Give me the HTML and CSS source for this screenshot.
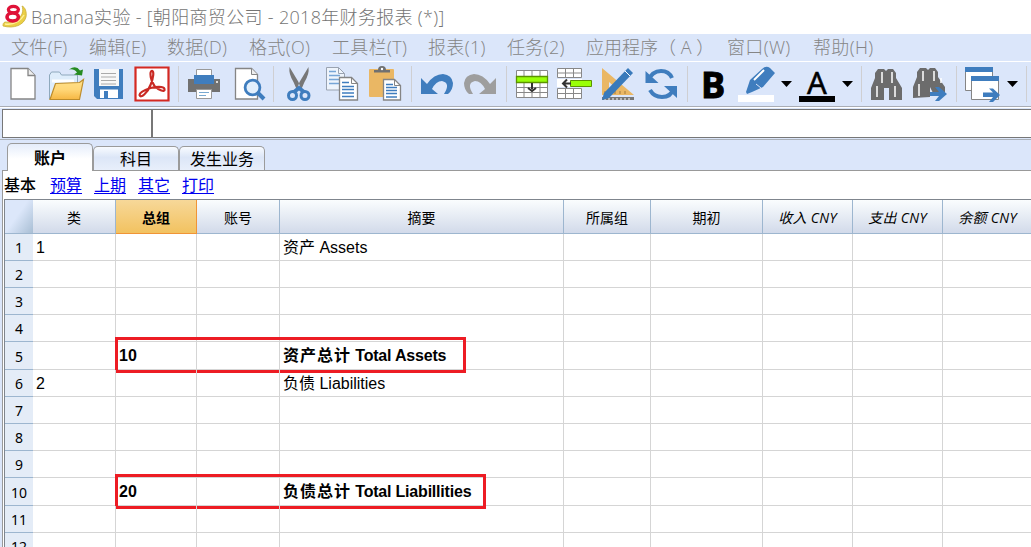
FILE: index.html
```html
<!DOCTYPE html>
<html lang="zh-CN">
<head>
<meta charset="utf-8">
<title>Banana实验 - [朝阳商贸公司 - 2018年财务报表 (*)]</title>
<link rel="stylesheet" href="styles.css">
</head>
<body>
<header class="titlebar">
  <svg class="logo" width="31" height="34" viewBox="0 0 31 34">
    <path d="M22 6c3 1 5 6 4 11-2 8-12 12-23 9 0-2 0-3 2-4 8 1 14-2 17-8 1-3 1-6 0-8z" fill="#ebcf45" stroke="#c9ae3a" stroke-width=".8"/>
    <path d="M5 24c9 1 15-2 19-9" fill="none" stroke="#fff19a" stroke-width="1.4"/>
    <ellipse cx="13.4" cy="9.6" rx="5" ry="3.3" fill="#fff" stroke="#df1238" stroke-width="3.3"/>
    <ellipse cx="12.7" cy="17" rx="5.700" ry="4" fill="#fff" stroke="#df1238" stroke-width="3.6"/>
  </svg>
  <h1 class="title">Banana实验 - [朝阳商贸公司 - 2018年财务报表 (*)]</h1>
</header>
<nav class="menu">
  <span>文件(F)</span><span>编辑(E)</span><span>数据(D)</span><span>格式(O)</span><span>工具栏(T)</span><span>报表(1)</span><span>任务(2)</span><span class="wide">应用程序（ A ）</span><span>窗口(W)</span><span>帮助(H)</span>
</nav>
<div class="toolbar">
  <div class="group">
    <svg width="45" height="44" viewBox="0 62 45 44"><path d="M11 68.5h17l7 7V99H11z" fill="#fff" stroke="#858585" stroke-width="1.3"/><path d="M28 68.5v7h7" fill="#eee" stroke="#858585" stroke-width="1.3"/></svg>
    <svg width="45" height="44" viewBox="45 62 45 44"><path d="M49.5 99V75l2-3h8l2 3h16v8" fill="#deedfb" stroke="#8ea9bd"/><path d="M52 81h22" stroke="#fff" stroke-width="3"/><path d="M50 99.500l5.500-16 24-1 4-3-4 20z" fill="url(#folder)" stroke="#bd8c2b" stroke-width="1.2"/><path d="M69 69.500q7-5 11 1l3-1-1 6-8-1 3-2q-3-4-8-3z" fill="#268b22"/><defs><linearGradient id="folder" x2="0" y2="1"><stop stop-color="#ffe18a"/><stop offset=".5" stop-color="#ffd778"/><stop offset="1" stop-color="#f6b743"/></linearGradient></defs></svg>
    <svg width="40" height="44" viewBox="90 62 40 44"><path d="M94 69h29v30H97l-3-3z" fill="#3f7dbe"/><path d="M99 69h20v17H99z" fill="#f8f8f8"/><path d="M101 73.500h15M101 77h15M101 80.500h15M101 84h15" stroke="#aaa"/><path d="M100 89.500h18V98h-18z" fill="#fff"/><path d="M104 91h4v7h-4z" fill="#3f7dbe"/></svg>
    <svg width="48" height="44" viewBox="130 62 48 44"><path d="M135.500 67.500h33v33h-33z" fill="#fff" stroke="#d42922" stroke-width="2.2"/><path d="M139.500 95c0-3 5-5 11-7 5-1 13-2 14 1 1 4-6 1-10-3-4-5-5-14-3-15 3-1 2 7-1 14-3 8-10 14-11 10z" fill="none" stroke="#c92a24" stroke-width="2.200"/></svg>
  </div>
  <div class="group">
    <svg width="48" height="44" viewBox="179 62 48 44"><path d="M188 79h32v13h-32z" fill="#717171"/><path d="M196.500 69.500h15v9h-15z" fill="#fff" stroke="#999"/><path d="M194 75h20v9h-20z" fill="#3f7dbe"/><path d="M196.500 89.500h15v9h-15z" fill="#fff" stroke="#999"/><path d="M199 92.500h10M199 95.500h7" stroke="#78a9d1"/><circle cx="217" cy="82" r="1" fill="#fff"/></svg>
    <svg width="46" height="44" viewBox="227 62 46 44"><path d="M235.500 68.500h16l6 6V99h-22z" fill="#fff" stroke="#858585" stroke-width="1.3"/><path d="M251.500 68.500v6h6" fill="#eee" stroke="#858585"/><circle cx="252.500" cy="87.500" r="7.400" fill="#e2effc" stroke="#3f7dbe" stroke-width="2.800"/><path d="m258 93 6 6" stroke="#3f7dbe" stroke-width="4"/></svg>
  </div>
  <div class="group">
    <svg width="45" height="44" viewBox="274 62 45 44"><path d="m289.500 67 9 15 2 6-4 1-3-7q-5-8-4-15zM308.500 67l-9 15-2 6 4 1 3-7q5-8 4-15z" fill="#777"/><circle cx="292.500" cy="95.500" r="4" fill="none" stroke="#3f7dbe" stroke-width="3"/><circle cx="305" cy="95.500" r="4" fill="none" stroke="#3f7dbe" stroke-width="3"/><path d="m294 92 5-4 5 4" fill="none" stroke="#3f7dbe" stroke-width="4"/></svg>
    <svg width="46" height="44" viewBox="319 62 46 44"><path d="M326.500 67.500h12l6 6V90h-18z" fill="#eef4fc" stroke="#9aa3b1"/><path d="M338.500 67.500v6h6" fill="none" stroke="#9aa3b1"/><path d="M329 71.500h7M329 75.500h11M329 79.500h11M329 83.500h10" stroke="#76a5d6" stroke-width="1.3"/><path d="M339.500 77.500h12l6 6V100h-18z" fill="#fff" stroke="#858585" stroke-width="1.3"/><path d="M351.500 77.500v6h6" fill="none" stroke="#858585"/><path d="M342 82.500h7M342 86.500h12M342 89.500h12M342 93h12M342 96.500h12" stroke="#3f7dbe" stroke-width="1.3"/></svg>
    <svg width="46" height="44" viewBox="365 62 46 44"><rect x="369" y="69" width="25" height="28" rx="1" fill="#eab764"/><path d="M374 72.500V70h4q0-4 4-4t4 4h4v2.500z" fill="#707070"/><circle cx="382" cy="69" r="1.200" fill="#fff"/><path d="M383.500 79.500h11l6 6V100h-17z" fill="#fff" stroke="#858585" stroke-width="1.3"/><path d="M394.500 79.500v6h6" fill="none" stroke="#858585"/><path d="M386 84.500h7M386 87.500h11M386 90.500h11M386 93.500h11M386 97h11" stroke="#3f7dbe" stroke-width="1.3"/></svg>
  </div>
  <div class="group">
    <svg width="46" height="44" viewBox="412 62 46 44"><path d="M421 78v16h17l-6-5q4-8 10-8 9 2 2 13h4q5-4 5-11-1-8-10-9-9 0-16 10z" fill="#3f7dbe"/></svg>
    <svg width="48" height="44" viewBox="458 62 48 44"><path d="M496 78v16h-17l6-5q-4-8-10-8-9 2-2 13h-4q-5-4-5-11 1-8 10-9 9 0 16 10z" fill="#9e9e9e"/></svg>
  </div>
  <div class="group">
    <svg width="47" height="44" viewBox="507 62 47 44"><path d="M516.500 70.500h31v27h-31zM516.500 87.500h31M516.500 92.500h31M524 71v27M532 71v27M540 71v27" fill="#fff" stroke="#888"/><path d="M516.500 76.500h31v6h-31z" fill="#99ff08" stroke="#5b9300" stroke-width="1.3"/><path d="M532 83v6m-4-1 4 3 4-3" fill="none" stroke="#333" stroke-width="2"/></svg>
    <svg width="43" height="44" viewBox="554 62 43 44"><path d="M557.500 68.500h24v9h-24zM557.500 73h24M565.500 68v9M573.500 68v9M557.500 88.500h24v10h-24zM557.500 93.500h24M565.500 88v10M573.500 88v10" fill="#fff" stroke="#888"/><path d="M557 79h25v8h-25z" fill="#fff"/><path d="M570.500 80.500h21v6h-21z" fill="#99ff08" stroke="#5b9300"/><path d="M571 83.500h-7m3-4-4 4 4 4" fill="none" stroke="#333" stroke-width="2"/></svg>
    <svg width="44" height="44" viewBox="597 62 44 44"><path d="M602 68v27h32zM609 82v7h8z" fill="#eab764" fill-rule="evenodd"/><path d="M602 97h32v3h-32z" fill="#777"/><path d="M605 100v-2M609 100v-2M613 100v-2M617 100v-2M621 100v-2M625 100v-2M629 100v-2" stroke="#fff"/><path d="M605 94v-3M610 94v-3M615 94v-3M620 94v-3M625 94v-3" stroke="#a17b3d"/><path d="m602 100 2-7 24-25 5 5-24 25z" fill="#397abb"/><path d="m625 71 5 5" stroke="#fff"/></svg>
    <svg width="46" height="44" viewBox="641 62 46 44"><path d="M648 81q4-10 13-10 8 0 11 7M674 88q-3 9-12 9-8 0-12-7" fill="none" stroke="#3f7dbe" stroke-width="4"/><path d="M645.500 71v12h13zM677 86v12l-13-12z" fill="#3f7dbe"/></svg>
  </div>
  <div class="group">
    <span class="bold-letter">B</span>
    <svg width="56" height="44" viewBox="738 62 56 44"><path d="M738 95h36v7h-36z" fill="#fff"/><path d="m746 92 4-12 12-11q4-4 8-1l5 5-12 14-11 5-5 2z" fill="#3f7dbe"/><path d="m754 80 10-10" stroke="#fff" stroke-width="2"/><path d="m756 84 5 4" stroke="#dbe6fa"/><path d="M781 81h11l-5.500 6z"/></svg>
    <div class="font-color"><span>A</span></div>
    <svg width="26" height="44" viewBox="835 62 26 44"><path d="M842 81h11l-5.500 6z"/></svg>
  </div>
  <div class="group">
    <svg width="45" height="44" viewBox="862 62 45 44"><path d="M871 100V88l4-10v-5l3-4h6l2 2 2-2h5l3 4v5l6 10v12h-13V88h-5v12z" fill="#6c6c6c"/><path d="M882 72v11M892 72v11M877 86v11M895 86v11" stroke="#fff" stroke-width="1.500"/></svg>
    <svg width="49" height="44" viewBox="907 62 49 44"><path d="M913 98V87l4-10v-5l3-4h6l2 2 2-2h5l3 4v5l7 10v6h-12l-3-6v10z" fill="#6c6c6c"/><path d="M923 71v10M934 71v10M919 84v12M941 78v5" stroke="#fff" stroke-width="1.500"/><path d="M930 92h9l-4-5h4l8 7-8 7h-4l4-5h-9z" fill="#3f7dbe"/></svg>
  </div>
  <div class="group">
    <svg width="69" height="44" viewBox="957 62 69 44"><path d="M965.500 68.500h27v22h-27z" fill="#fff" stroke="#858585"/><path d="M965 67h28v5h-28z" fill="#3f7dbe"/><path d="M971.500 77.500h27v22h-27z" fill="#fff" stroke="#858585"/><path d="M971 76h28v5h-28z" fill="#3f7dbe"/><path d="M983 92.500h10l-4-4h4l7 6.500-7 7h-4l4-5h-10z" fill="#3f7dbe"/><path d="M1007 81h11l-5.500 6z"/></svg>
  </div>
</div>
<div class="entry"><div class="cell-name"></div><div class="formula"></div></div>
<div class="tabs"><div class="tab active">账户</div><div class="tab">科目</div><div class="tab">发生业务</div></div>
<main class="page">
  <div class="views"><b>基本</b><a>预算</a><a>上期</a><a>其它</a><a>打印</a></div>
  <div class="sheet">
    <div class="row head"><div class="corner"></div><div>类</div><div class="selected">总组</div><div>账号</div><div>摘要</div><div>所属组</div><div>期初</div><div class="it">收入 CNY</div><div class="it">支出 CNY</div><div class="it">余额 CNY</div></div>
    <div class="row"><div class="num">1</div><div>1</div><div></div><div></div><div>资产 Assets</div><div></div><div></div><div></div><div></div><div></div></div>
    <div class="row"><div class="num">2</div><div></div><div></div><div></div><div></div><div></div><div></div><div></div><div></div><div></div></div>
    <div class="row"><div class="num">3</div><div></div><div></div><div></div><div></div><div></div><div></div><div></div><div></div><div></div></div>
    <div class="row"><div class="num">4</div><div></div><div></div><div></div><div></div><div></div><div></div><div></div><div></div><div></div></div>
    <div class="row total"><div class="num">5</div><div></div><div>10</div><div></div><div><span class="han">资产总计</span><span class="latin"> Total Assets</span></div><div></div><div></div><div></div><div></div><div></div><i class="mark assets"></i></div>
    <div class="row"><div class="num">6</div><div>2</div><div></div><div></div><div>负债 Liabilities</div><div></div><div></div><div></div><div></div><div></div></div>
    <div class="row"><div class="num">7</div><div></div><div></div><div></div><div></div><div></div><div></div><div></div><div></div><div></div></div>
    <div class="row"><div class="num">8</div><div></div><div></div><div></div><div></div><div></div><div></div><div></div><div></div><div></div></div>
    <div class="row"><div class="num">9</div><div></div><div></div><div></div><div></div><div></div><div></div><div></div><div></div><div></div></div>
    <div class="row total"><div class="num">10</div><div></div><div>20</div><div></div><div><span class="han">负债总计</span><span class="latin"> Total Liabillities</span></div><div></div><div></div><div></div><div></div><div></div><i class="mark liabilities"></i></div>
    <div class="row"><div class="num">11</div><div></div><div></div><div></div><div></div><div></div><div></div><div></div><div></div><div></div></div>
    <div class="row"><div class="num">12</div><div></div><div></div><div></div><div></div><div></div><div></div><div></div><div></div><div></div></div>
  </div>
</main>
</body>
</html>
```
FILE: styles.css
```css
* { box-sizing: border-box; }
body { margin: 0; width: 1031px; height: 547px; overflow: hidden; background: #dbe6fa; color: #000; font-family: "Liberation Sans", "Noto Sans CJK SC", sans-serif; font-size: 16px; }
.titlebar { display: flex; height: 34px; background: #fff; }
.title { margin: 0; font: 300 18px/35px "Open Sans", "Noto Sans CJK SC", sans-serif; letter-spacing: .32px; color: #747474; white-space: nowrap; }
.menu { display: grid; grid-template-columns: 78px 78px 82px 83px 96px 79px 79px 141px 86px 80px; height: 28px; padding-left: 11px; border-bottom: 1px solid #fff; font: 300 18px/27px "Open Sans", "Noto Sans CJK SC", sans-serif; letter-spacing: .35px; color: #858585; white-space: nowrap; }
.menu .wide { letter-spacing: 0; }
.toolbar { display: flex; height: 45px; border-bottom: 1px solid #a9adb5; }
.group { display: flex; height: 44px; background: linear-gradient(#cfcfd2, #cfcfd2) right 4px / 1px 36px no-repeat; padding-right: 1px; }
.group svg { display: block; flex: none; }
.bold-letter { width: 50px; padding-left: 13px; font: 700 36px/46px "Open Sans", sans-serif; -webkit-text-stroke: 1px #000; }
.font-color { width: 41px; padding-left: 5px; }
.font-color span { display: block; width: 36px; height: 40px; border-bottom: 6px solid #000; text-align: center; font: 400 31px/40px "Noto Sans", sans-serif; -webkit-text-stroke: .5px #000; }
.entry { display: flex; height: 33px; padding: 1px 0 1px 2px; border-top: 1px solid #fff; border-bottom: 1px solid #aab0b9; }
.cell-name, .formula { height: 29px; border: 1px solid #777; background: #fff; }
.cell-name { width: 150px; }
.formula { flex: 1; border-right: 0; }
.tabs { display: flex; align-items: flex-end; height: 30px; padding-left: 7px; font-size: 16px; }
.tab { width: 86px; height: 24px; border: 1px solid #9b9b9b; border-bottom: 0; border-radius: 5px 5px 0 0; background: linear-gradient(#f8fbff, #dce6f7 45%, #e8effb); text-align: center; line-height: 25px; white-space: nowrap; }
.tab.active { position: relative; z-index: 1; height: 28px; margin-bottom: -1px; background: linear-gradient(#e5edfb, #fff 55%); font-weight: 700; line-height: 30px; }
.page { height: 377px; margin-left: 2px; border: 1px solid #999; border-width: 1px 0 0 1px; background: #fff; }
.views { display: flex; gap: 12px; height: 28px; padding-left: 1px; line-height: 29px; }
.views b { width: 34px; font-weight: 500; }
.views a { width: 32px; color: #0000f0; text-decoration: underline; text-underline-offset: 2px; text-decoration-thickness: 1px; }
.sheet { margin-left: 1px; border: 1px solid #7f858d; border-width: 1px 0 0 1px; }
.row { position: relative; display: grid; grid-template-columns: 28px 83px 81px 83px 284px 87px 112px 90px 90px 90px; grid-template-rows: 100%; height: 27px; line-height: 28px; }
.row > div { padding-left: 3px; border: 1px solid #d5d5d5; border-width: 0 1px 1px 0; white-space: nowrap; }
.row > .num { padding: 0; border-right: 0; border-bottom-color: #9db6cf; background: #e4ecf7; text-align: center; font: 14px/27px "Noto Sans", sans-serif; }
.row.total { height: 28px; font-weight: 700; }
.row.total .num { line-height: 29px; }
.row.head { height: 34px; font: 14px/35px "Open Sans", "Noto Sans CJK SC", sans-serif; }
.row.head > div { padding: 0; border-color: #9db6cf; text-align: center; background: linear-gradient(#fafdfe, #d2daea); }
.row.head > .corner { border-right: 0; background: linear-gradient(125deg, #dce7fa 45%, #a8bed4); }
.row.head > .selected { border-right-color: #f09436; border-bottom-color: #f09436; background: linear-gradient(#f7d899, #f2c260); font-weight: 700; }
.row.head .it { font-style: italic; letter-spacing: .3px; }
.han { letter-spacing: 1px; }
.latin { letter-spacing: -.2px; }
.mark { position: absolute; left: 110px; top: -5px; height: 36px; border: 3px solid #ed1c24; }
.assets { width: 351px; }
.liabilities { width: 371px; top: -4px; height: 35px; }
```
